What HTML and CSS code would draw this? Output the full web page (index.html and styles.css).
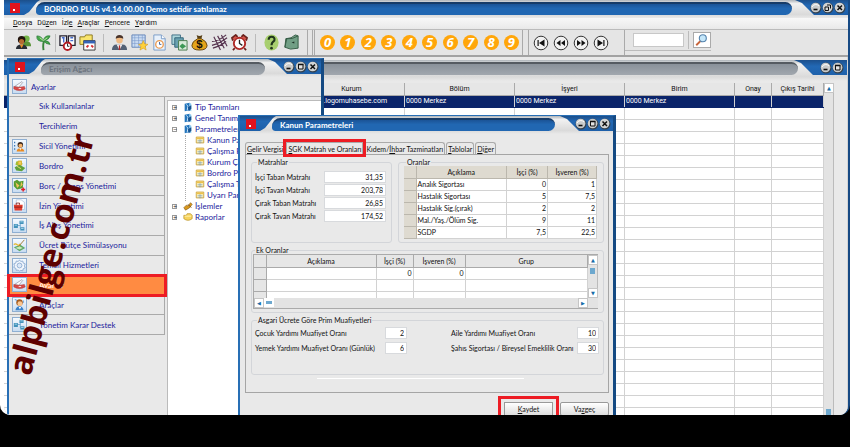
FILE: index.html
```html
<!DOCTYPE html>
<html lang="tr">
<head>
<meta charset="utf-8">
<title>BORDRO PLUS</title>
<link rel="stylesheet" href="styles.css">
</head>
<body>
<svg class="defs" aria-hidden="true">
  <symbol id="min" viewBox="0 0 12 12"><circle cx="6" cy="6" r="5.5" fill="#34404c"/><circle cx="5.6" cy="5.5" r="4.8" fill="#c9cbcb"/><path d="M2 5a4 3.6 0 0 1 7-1" stroke="#fff" fill="none"/><path d="M3.5 7.5h4" stroke="#111" stroke-width="1.6"/></symbol>
  <symbol id="max" viewBox="0 0 12 12"><circle cx="6" cy="6" r="5.5" fill="#34404c"/><circle cx="5.6" cy="5.5" r="4.8" fill="#c9cbcb"/><path d="M3.5 3.5h4.500v4.500h-4.500z" stroke="#111" fill="#e4e4e4"/><path d="M3 3.500h5.500" stroke="#111" stroke-width="1.500"/></symbol>
  <symbol id="res" viewBox="0 0 12 12"><circle cx="6" cy="6" r="5.5" fill="#34404c"/><circle cx="5.6" cy="5.5" r="4.8" fill="#d2d4d4"/><path d="M5 3h3.500v3.500M3 5h3.500v3.500h-3.500z" stroke="#111" fill="none"/></symbol>
  <symbol id="cls" viewBox="0 0 12 12"><circle cx="6" cy="6" r="5.5" fill="#34404c"/><circle cx="5.6" cy="5.5" r="4.8" fill="#d2d4d4"/><path d="M3.500 3.500l4.500 4.500M8 3.500l-4.500 4.500" stroke="#111" stroke-width="1.500"/></symbol>
  <symbol id="knife" viewBox="0 0 16 16"><path d="M2 8l9-6 1 1-5 6z" fill="#fff" stroke="#889" stroke-width=".8"/><path d="M1 8q6 2 13 0l1 3q-7 4-14 0z" fill="#d94a48" stroke="#a33" stroke-width=".6"/><path d="M7 10.500h3" stroke="#fff"/></symbol>
  <symbol id="user" viewBox="0 0 16 16"><path d="M2 2v12" stroke="#3a78b8" stroke-width="1.500" stroke-dasharray="2 2"/><circle cx="9" cy="6" r="3.400" fill="#3c2a20"/><circle cx="9.200" cy="7" r="2.500" fill="#f5b26b"/><path d="M4.500 14q.5-4 4.500-4t5 4z" fill="#eb8a20"/><path d="M8 10l1 3 1-3" fill="#fff"/></symbol>
  <symbol id="coins" viewBox="0 0 16 16"><path d="M4 3l5-1 3 4-4 3-5-2z" fill="#a2bd35"/><path d="M6 2h5v6H6z" fill="#d9b32f"/><path d="M2 10l6-3 7 4-4 4-7-1z" fill="#5fa03a"/><path d="M5 9l5 3M7 4h3M7 6h3" stroke="#ffe27b"/></symbol>
  <symbol id="debt" viewBox="0 0 16 16"><path d="M1 3l4-2 3 2 5-1-1 9-7 2-4-4z" fill="#579d30"/><path d="M3 4l5 4-3 3zM10 3l2 4-3 3z" fill="#f0c25c"/><path d="M10 13h5M12.500 10.500v5" stroke="#e21d25" stroke-width="1.800"/></symbol>
  <symbol id="case" viewBox="0 0 16 16"><path d="M4 1h6l4 3v9H4z" fill="#fff" stroke="#8ba7c8" stroke-width=".6"/><path d="M1 7h11l-1 7H2z" fill="#e23f2f"/><path d="M4 7V5h4v2M1.500 10h10" stroke="#7c1715" fill="none"/></symbol>
  <symbol id="flow" viewBox="0 0 16 16"><path d="M4 8h5M9 4v8" stroke="#67a3cc"/><path d="M1 6h5v5H1zM8 2h5v4H8zM9 10h5v4H9z" fill="#4292ba"/><path d="M2 7h3v1H2zM9 3h3v1H9zM10 11h3v1h-3z" fill="#bce3f4"/></symbol>
  <symbol id="budget" viewBox="0 0 16 16"><path d="M1 10l8-3 6 4-7 4z" fill="#5fa864"/><path d="M3 11l5-2 4 2-4 2z" fill="#c9e8bb"/><path d="M1 7q2-2 4 0t4-1" fill="none" stroke="#e8b523" stroke-width="1.500"/><path d="M7 9l7-8" stroke="#a37c39" stroke-width="1.200"/></symbol>
  <symbol id="gear" viewBox="0 0 16 16"><path d="M8 1l1.500 2 2.500-.5.500 2.500 2.500 1-1 2.500 1 2.500-2.500 1-.5 2.500-2.500-.5L8 15l-1.500-1.500-2.500.5-.5-2.500-2.500-1 1-2.500-1-2 2.500-1L4 2.500l2.500.5z" fill="#f2f7fd" stroke="#85a5cc"/><circle cx="8" cy="8" r="3" fill="#dbe8f7" stroke="#85a5cc"/></symbol>
  <symbol id="tools" viewBox="0 0 16 16"><circle cx="8" cy="5.500" r="4" fill="#a55d22"/><circle cx="8.500" cy="7" r="3" fill="#fac58e"/><path d="M3 15q1-5 5-5t5 5z" fill="#3a82ca"/><path d="M7 11l1.500 3 1.500-3z" fill="#fff"/><path d="M2 2h2v2M13 3v3" stroke="#5b9bdb" fill="none"/></symbol>
  <symbol id="book" viewBox="0 0 12 12"><path d="M2 2l6-1v9l-6 1z" fill="#2476bd"/><path d="M8 1l2 1v9l-3-1z" fill="#8bc8ef"/><path d="M4 3l2 2-1 5" stroke="#e8f6ff" fill="none"/><path d="M6 6l4-2v4l-3 3z" fill="#185390"/></symbol>
  <symbol id="form" viewBox="0 0 12 12"><path d="M1.500 2.500h9v7h-9z" fill="#fff6c4" stroke="#c79b2c"/><path d="M2 3h8v2H2z" fill="#ecc14c"/><path d="M3 6.500h6M3 8.500h6M6 5v5" stroke="#7897b6" stroke-width=".7"/></symbol>
  <symbol id="hand" viewBox="0 0 12 12"><path d="M1 8l3-3 2 1 3-4 2 2-3 4-5 3z" fill="#d9991f" stroke="#805510" stroke-width=".7"/><path d="M6 4l4 4" stroke="#76480d"/></symbol>
  <symbol id="folder" viewBox="0 0 12 12"><path d="M1 4h3l1-2h4l2 2v4q-5 4-10 0z" fill="#f7d35d" stroke="#b58c1c" stroke-width=".8"/><path d="M2 5h8" stroke="#fff5bb"/></symbol>
</svg>
<main class="app">
  <header class="titlebar active">
    <i class="logo"></i><h1 class="pill">BORDRO PLUS v4.14.00.00 Demo setidir satılamaz</h1>
    <span class="winbtns"><button aria-label="Küçült"><svg><use href="#min"/></svg></button><button aria-label="Önceki boyut"><svg><use href="#res"/></svg></button><button aria-label="Kapat"><svg><use href="#cls"/></svg></button></span>
  </header>
  <nav class="menubar"><a href="#d"><u>D</u>osya</a><a href="#u">Dü<u>z</u>en</a><a href="#i">İzl<u>e</u></a><a href="#a"><u>A</u>raçlar</a><a href="#p"><u>P</u>encere</a><a href="#y"><u>Y</u>ardım</a></nav>
  <div class="toolbar">
    <div class="group tools">
      <button aria-label="Personel"><svg viewBox="0 0 18 18"><circle cx="12" cy="5" r="3.500" fill="#75b548"/><path d="M8 13q0-5 5-5 4 0 4 5z" fill="#589235"/><circle cx="7" cy="6" r="4" fill="#21150e"/><circle cx="7" cy="8" r="2.700" fill="#b56b32"/><path d="M1 16q0-5 6-5t6 5z" fill="#282d35"/><path d="M5 11l2 4 2-4z" fill="#ed8d25"/></svg></button>
      <button aria-label="Palmiye"><svg viewBox="0 0 18 18"><path d="M9 17q-1-7 1-10" stroke="#38843a" stroke-width="2" fill="none"/><path d="M9 8Q1 8 2 2q5 0 7 5 1-6 7-5-1 4-6 5 5 0 6 4-5 0-7-4z" fill="#48a849" stroke="#267536" stroke-width=".7"/><path d="M5 4l4 3 4-3" stroke="#bfe9a2" fill="none"/></svg></button>
      <i class="sep"></i>
      <button aria-label="Takvim"><svg viewBox="0 0 18 18"><path d="M1 2h7v10H1zM10 2h7v10h-7z" fill="#fff" stroke="#24212e" stroke-width="1.400"/><path d="M3 4h3M12 4h3M5 4v5M12 7h3" stroke="#466dcc" stroke-width="1.500"/><circle cx="9" cy="13" r="4" fill="#fff" stroke="#b31b22" stroke-width="2"/><path d="M9 10v3h2" stroke="#222" fill="none"/></svg></button>
      <button aria-label="Dosyalar"><svg viewBox="0 0 18 18"><path d="M1 3h5l1-2h7v10H1z" fill="#f9e56d" stroke="#8b7821"/><path d="M5 7h12v10H5z" fill="#fff" stroke="#333"/><path d="M5 7h12v3H5z" fill="#3564b6"/><path d="M8 14l2-2M13 12l2 2" stroke="#d33234" stroke-width="2"/></svg></button>
      <i class="sep wide"></i>
      <button aria-label="Sicil kartı"><svg viewBox="0 0 18 18"><ellipse cx="9" cy="6" rx="3.500" ry="4" fill="#efb982"/><path d="M5 5q0-4 4-4t4 4q-4-2-8 0z" fill="#49332a"/><path d="M1 17q0-6 5-6h6q5 0 5 6z" fill="#536175"/><path d="M6 11h6l-3 6z" fill="#fff"/><path d="M9 12v5" stroke="#b12b2a" stroke-width="1.500"/></svg></button>
      <button aria-label="Puantaj"><svg viewBox="0 0 18 18"><path d="M1 1h14v13H1z" fill="#cbdcf2" stroke="#6485b8"/><path d="M1 4h14M1 7h14M1 10h14M4 1v13M8 1v13M12 1v13" stroke="#7999cb" stroke-width=".6"/><path d="M13 7l1.500 3.500 3.500.5-3 2 1 4-3-2-3.500 2 1-4-2.500-2 3.500-.5z" fill="#ffd13a" stroke="#d49a13" stroke-width=".6"/></svg></button>
      <button aria-label="Mesai"><svg viewBox="0 0 18 18"><path d="M3 1h8l4 4v12H3z" fill="#e8f1fb" stroke="#799bc7"/><path d="M11 1v4h4" fill="#fff" stroke="#799bc7"/><circle cx="9" cy="11" r="4" fill="#fff" stroke="#eb9a50" stroke-width="1.400"/><path d="M9 8.500V11h2" stroke="#3b639f" fill="none"/></svg></button>
      <button aria-label="Kopyala"><svg viewBox="0 0 18 18"><path d="M1 1h9v10H1z" fill="#acd5da" stroke="#427087"/><path d="M4 4h9v10H4z" fill="#69a1b0" stroke="#32657a"/><path d="M8 7h9v10H8z" fill="#d7ead9" stroke="#487b4c"/><path d="M9 13l3-3 4 3-4 3z" fill="#3d9856"/></svg></button>
      <button aria-label="Ücret"><svg viewBox="0 0 18 18"><path d="M6 1q3 2 6 0l-1 4H7z" fill="#574019"/><path d="M7 5Q1 8 1 12q0 5 8 5t8-5q0-4-6-7z" fill="#e5a51c" stroke="#63430d"/><text x="9" y="15" class="money">$</text></svg></button>
      <button aria-label="Tarama"><svg viewBox="0 0 18 18"><path d="M1 8Q8 8 16 1M1 12Q9 10 17 4M2 15q8-2 14-7M3 3l7 14M7 2l7 13M11 1l6 12" stroke="#55324e" stroke-width="1.200" fill="none"/></svg></button>
      <button aria-label="Alarm"><svg viewBox="0 0 18 18"><path d="M2 7L1 4l4-3 2 2M16 7l1-3-4-3-2 2M4 15l-2 2M14 15l2 2" stroke="#68221d" stroke-width="1.800" fill="#db5447"/><circle cx="9" cy="10" r="6" fill="#fff" stroke="#af2a27" stroke-width="2"/><path d="M9 6v4l3 2" stroke="#222" stroke-width="1.400" fill="none"/></svg></button>
      <i class="sep wide"></i>
      <button aria-label="Yardım"><svg viewBox="0 0 18 18"><ellipse cx="9" cy="9" rx="7.500" ry="8.500" fill="#a8cf6f"/><path d="M6 6q0-3 3-3 4 0 3 4-3 2-3 5" stroke="#20351d" stroke-width="2.200" fill="none"/><circle cx="9" cy="15" r="1.400" fill="#20351d"/></svg></button>
      <button aria-label="Çıkış"><svg viewBox="0 0 18 18"><path d="M3 5q6 0 10-4l3 1v13l-8 1-6-2z" fill="#719f85" stroke="#355c45"/><path d="M3 5q7 1 13-3M4 5l-2 9" stroke="#355c45" fill="none"/><path d="M9 9l3-1v2z" fill="#1d3226"/></svg></button>
    </div>
    <div class="group digits"><button>0</button><button>1</button><button>2</button><button>3</button><button>4</button><button>5</button><button>6</button><button>7</button><button>8</button><button>9</button></div>
    <div class="group travel">
      <button aria-label="İlk"><svg viewBox="0 0 16 16"><circle cx="8" cy="8" r="6.800"/><path d="M4.500 5v6h1.200V5zM11.500 4.500v7L6 8z"/></svg></button>
      <button aria-label="Önceki"><svg viewBox="0 0 16 16"><circle cx="8" cy="8" r="6.800"/><path d="M7.500 5v6l-4-3zM12 5v6L8 8z"/></svg></button>
      <button aria-label="Sonraki"><svg viewBox="0 0 16 16"><circle cx="8" cy="8" r="6.800"/><path d="M4 5v6l4-3zM8.500 5v6l4-3z"/></svg></button>
      <button aria-label="Son"><svg viewBox="0 0 16 16"><circle cx="8" cy="8" r="6.800"/><path d="M10.300 5v6h1.200V5zM4.500 4.500v7L10 8z"/></svg></button>
    </div>
    <div class="search"><input type="text" aria-label="Ara"><i class="sep"></i><button aria-label="Bul"><svg viewBox="0 0 16 16"><path d="M2 14l5-5" stroke="#c8653c" stroke-width="2.200"/><circle cx="9.500" cy="6" r="4" fill="#c5e7fa" stroke="#5684ad" stroke-width="1.300"/></svg></button></div>
  </div>
  <div class="desktop">
    <section class="records">
      <header class="titlebar"><i class="logo"></i><span class="pill"></span><span class="winbtns"><button aria-label="Küçült"><svg><use href="#min"/></svg></button><button aria-label="Büyüt"><svg><use href="#max"/></svg></button></span></header>
      <div class="recordgrid">
        <table class="grid" id="records">
          <colgroup><col class="c-rest"><col class="c-110"><col class="c-110"><col class="c-110"><col class="c-37"><col class="c-52"></colgroup>
          <thead><tr><th class="kurum">Kurum</th><th>Bölüm</th><th>İşyeri</th><th>Birim</th><th>Onay</th><th>Çıkış Tarihi</th></tr></thead>
          <tbody><tr class="sel"><td class="kurum">www.logomuhasebe.com</td><td>0000 Merkez</td><td>0000 Merkez</td><td>0000 Merkez</td><td></td><td></td></tr></tbody>
        </table>
        <div class="vscroll"><button aria-label="Yukarı">▲</button><i></i></div>
      </div>
    </section>

    <section class="window treewin">
      <header class="titlebar"><i class="logo"></i><h2 class="pill">Erişim Ağacı</h2><span class="winbtns"><button aria-label="Küçült"><svg><use href="#min"/></svg></button><button aria-label="Büyüt"><svg><use href="#max"/></svg></button><button aria-label="Kapat"><svg><use href="#cls"/></svg></button></span></header>
      <div class="crumb"><svg class="tile"><use href="#knife"/></svg><span>Ayarlar</span></div>
      <div class="split">
        <nav class="side">
          <a href="#1"><i></i>Sık Kullanılanlar</a><a href="#2"><i></i>Tercihlerim</a>
          <a href="#3"><svg class="tile"><use href="#user"/></svg>Sicil Yönetimi</a>
          <a href="#4"><svg class="tile"><use href="#coins"/></svg>Bordro</a>
          <a href="#5"><svg class="tile"><use href="#debt"/></svg>Borç / Avans Yönetimi</a>
          <a href="#6"><svg class="tile"><use href="#case"/></svg>İzin Yönetimi</a>
          <a href="#7"><svg class="tile"><use href="#flow"/></svg>İş Akış Yönetimi</a>
          <a href="#8"><svg class="tile"><use href="#budget"/></svg>Ücret Bütçe Simülasyonu</a>
          <a href="#9"><svg class="tile"><use href="#gear"/></svg>Temsil Hizmetleri</a>
          <a href="#10" class="current"><svg class="tile"><use href="#knife"/></svg>Ayarlar</a>
          <a href="#11"><svg class="tile"><use href="#tools"/></svg>Araçlar</a>
          <a href="#12"><svg class="tile"><use href="#flow"/></svg>Yönetim Karar Destek</a>
        </nav>
        <ul class="tree">
          <li><b>+</b><svg><use href="#book"/></svg>Tip Tanımları</li>
          <li><b>+</b><svg><use href="#book"/></svg>Genel Tanımlar</li>
          <li><b>−</b><svg><use href="#book"/></svg>Parametreler
            <ul><li><svg><use href="#form"/></svg>Kanun Parametreleri</li><li><svg><use href="#form"/></svg>Çalışma Parametreleri</li><li><svg><use href="#form"/></svg>Kurum Çalışma</li><li><svg><use href="#form"/></svg>Bordro Parametreleri</li><li><svg><use href="#form"/></svg>Çalışma Takvimi</li><li><svg><use href="#form"/></svg>Uyarı Parametreleri</li></ul></li>
          <li><b>+</b><svg><use href="#hand"/></svg>İşlemler</li>
          <li><b>+</b><svg><use href="#folder"/></svg>Raporlar</li>
        </ul>
      </div>
    </section>

    <section class="window dialog">
      <header class="titlebar active"><i class="logo"></i><h2 class="pill">Kanun Parametreleri</h2><span class="winbtns"><button aria-label="Küçült"><svg><use href="#min"/></svg></button><button aria-label="Büyüt"><svg><use href="#max"/></svg></button><button aria-label="Kapat"><svg><use href="#cls"/></svg></button></span></header>
      <div class="tabs"><button><u>G</u>elir Vergisi</button><button class="on"><u>S</u>GK Matrah ve Oranları</button><button>Kıdem/<u>İh</u>bar Tazminatları</button><button><u>T</u>ablolar</button><button><u>D</u>iğer</button></div>
      <form class="page">
        <div class="top">
          <fieldset class="matrah"><legend>Matrahlar</legend>
            <label for="m1">İşçi Taban Matrahı</label><input id="m1" value="31,35">
            <label for="m2">İşçi Tavan Matrahı</label><input id="m2" value="203,78">
            <label for="m3">Çırak Taban Matrahı</label><input id="m3" value="26,85">
            <label for="m4">Çırak Tavan Matrahı</label><input id="m4" value="174,52">
          </fieldset>
          <fieldset class="oran"><legend>Oranlar</legend>
            <table class="grid beige"><colgroup><col class="c-12"><col class="c-rest"><col class="c-41"><col class="c-49"></colgroup>
              <thead><tr><th></th><th>Açıklama</th><th>İşçi (%)</th><th>İşveren (%)</th></tr></thead>
              <tbody><tr><th></th><td>Analık Sigortası</td><td class="n">0</td><td class="n">1</td></tr><tr><th></th><td>Hastalık Sigortası</td><td class="n">5</td><td class="n">7,5</td></tr><tr><th></th><td>Hastalık Sig.(çırak)</td><td class="n">2</td><td class="n">2</td></tr><tr><th></th><td>Mal./Yaş./Ölüm Sig.</td><td class="n">9</td><td class="n">11</td></tr><tr><th></th><td>SGDP</td><td class="n">7,5</td><td class="n">22,5</td></tr></tbody></table>
          </fieldset>
        </div>
        <fieldset class="ek"><legend>Ek Oranlar</legend>
          <div class="ekgrid">
            <div class="clip"><table class="grid"><colgroup><col class="c-12"><col class="c-110"><col class="c-37"><col class="c-52"><col class="c-rest"></colgroup>
              <thead><tr><th></th><th>Açıklama</th><th>İşçi (%)</th><th>İşveren (%)</th><th>Grup</th></tr></thead>
              <tbody><tr><th></th><td></td><td class="n">0</td><td class="n">0</td><td></td></tr><tr><th></th><td></td><td></td><td></td><td></td></tr><tr><th></th><td></td><td></td><td></td><td></td></tr></tbody></table></div>
            <div class="vscroll"><button type="button" aria-label="Yukarı">▲</button><i></i><button type="button" class="end" aria-label="Aşağı">▼</button></div>
            <div class="hscroll"><button type="button" aria-label="Sol">◀</button><i></i><button type="button" class="end" aria-label="Sağ">▶</button></div>
          </div>
        </fieldset>
        <fieldset class="muaf"><legend>Asgari Ücrete Göre Prim Muafiyetleri</legend>
          <label for="a1">Çocuk Yardımı Muafiyet Oranı</label><input id="a1" value="2"><label class="r" for="a2">Aile Yardımı Muafiyet Oranı</label><input id="a2" value="10">
          <label for="a3">Yemek Yardımı Muafiyet Oranı (Günlük)</label><input id="a3" value="6"><label class="r" for="a4">Şahıs Sigortası / Bireysel Emeklilik Oranı</label><input id="a4" value="30">
        </fieldset>
        <hr>
      </form>
      <footer class="actions"><button class="marked"><u>K</u>aydet</button><button>Va<u>z</u>geç</button></footer>
    </section>
  </div>
</main>
<div class="base"></div>
<div class="watermark">alpbilge.com.tr</div>
<script src="script.js"></script>
</body>
</html>
```
FILE: styles.css
```css
* { box-sizing: border-box; }
body { margin: 0; height: 100vh; display: flex; flex-direction: column; overflow: hidden; background: #000; position: relative; font: 7px/10px Roboto, "Liberation Sans", sans-serif; color: #111; }
button, input { font: inherit; color: inherit; padding: 0; margin: 0; border: 0; background: none; min-width: 0; }
h1, h2, ul, fieldset, hr { margin: 0; padding: 0; border: 0; list-style: none; }
a { color: inherit; text-decoration: none; }
svg { display: block; }
.defs { position: absolute; width: 0; height: 0; }
.app { flex: 1; min-height: 0; display: flex; flex-direction: column; background: #e6e6e6; border-left: 4px solid #fff; border-right: 2px solid #174a84; border-radius: 0 0 10px 10px; overflow: hidden; }
.base { height: 32px; background: #000; flex: none; }

.titlebar { position: relative; flex: none; height: 18px; display: flex; align-items: flex-start; background: linear-gradient(#1c4f8b, #2268b4 30%, #1b5ca5); }
.titlebar::before { content: ""; position: absolute; inset: 0; background: linear-gradient(#aeb4ba, #f1f1f1 20%, #dadada 80%, #e9e9e9); clip-path: polygon(36px 0, calc(100% - 53px) 0, calc(100% - 46px) 3px, calc(100% - 34px) 15px, 100% 15px, 100% 100%, 0 100%, 0 15px, 20px 15px, 25px 12px, 33px 2px); }
.titlebar > * { position: relative; }
.logo { width: 10px; height: 10px; margin: 3px 16px 0 6px; background: radial-gradient(circle at 4px 7px, #fff 1px, transparent 1px), #e0131d; }
.pill { flex: 1; height: 13px; margin: 2px 0 0; padding-left: 8px; border-radius: 9px 7px 7px 4px; font: bold 8px/10px Lato, "Liberation Sans", sans-serif; white-space: nowrap; border-top: 2px solid #555b62; background: linear-gradient(#89919a, #a1a7ae); color: #6c737d; }
.active .pill { background: linear-gradient(#1b5396, #2167b2 40%); border-top-color: #173c68; color: #fff; }
.winbtns { display: flex; margin: 2px 2px 0 18px; }
.winbtns button, .winbtns svg { width: 12px; height: 12px; display: block; }

.menubar { height: 11px; display: flex; gap: 5px; padding-left: 9px; background: linear-gradient(#f8f8f8, #e9e9e9); line-height: 11px; flex: none; }
.toolbar { height: 28px; flex: none; display: flex; border-bottom: 2px solid #a2a2a2; border-top: 1px solid #bbb; background: #e5e5e5; }
.group { display: flex; align-items: center; border-right: 1px solid #aaa; flex: none; }
.group button { flex: none; }
.tools { width: 304px; padding-left: 11px; gap: 3px; }
.tools svg { width: 17px; height: 17px; }
.sep { width: 1px; height: 18px; background: #bbb; }
.sep.wide { margin: 0 4px; }
.money { font: bold 12px "Liberation Sans", sans-serif; text-anchor: middle; fill: #18120a; }
.digits { width: 211px; padding: 0 3px 0 5px; justify-content: space-between; margin: 0 5px 0 4px; border-left: 3px double #aaa; }
.digits button { width: 15px; height: 15px; border-radius: 50%; background: #ffa60a; color: #fff; font: italic bold 13px/15px "Open Sans", sans-serif; text-align: center; }
.travel { width: 97px; padding-left: 4px; gap: 4px; border-left: 1px solid #aaa; }
.travel svg { width: 16px; height: 16px; }
.travel circle { fill: #f2f2f2; stroke: #333; }
.travel path { fill: #111; }
.search { display: flex; gap: 4px; align-items: center; align-self: flex-start; padding: 1px 0 1px 8px; border-bottom: 1px solid #bbb; }
.search input { width: 51px; height: 14px; background: #fff; border: 1px solid #c8c8c8; }
.search button { width: 18px; height: 16px; background: #fff; border: 1px solid #aaa; }
.search svg { width: 15px; height: 14px; }

.desktop { flex: 1; min-height: 0; position: relative; overflow: hidden; background: #d4d4d4; }
.records { height: 100%; padding-top: 3px; display: flex; flex-direction: column; background: #e9e9e9; margin-right: 1px; }
.records .titlebar { height: 21px; }
.records .winbtns { margin: 2px 3px 0 22px; }
.recordgrid { display: flex; flex: 1; min-height: 0; margin-top: 2px; padding-right: 13px; overflow: hidden; }
.recordgrid .grid { flex: 1; align-self: flex-start; }
.grid { border-collapse: collapse; table-layout: fixed; width: 100%; background: #fff; line-height: 10px; }
.grid tr { height: 12px; }
.grid th, .grid td { padding: 0 1px; border: 1px solid #d2d2d2; border-width: 0 1px 1px 0; height: 12px; line-height: 10px; white-space: nowrap; overflow: hidden; font-weight: normal; text-align: left; }
.grid th { background: #e6e6e6; border-color: #aaa; text-align: center; }
.beige th { background: #dedad0; border-color: #bbb7ad; }
.grid td.n { text-align: right; }
.grid .sel td { background: #0a246a; color: #fff; border-bottom-color: #0a246a; }
.grid .kurum { padding-left: 296px; }
.grid td.kurum { padding-left: 304px; }
.c-12 { width: 12px; } .c-37 { width: 37px; } .c-41 { width: 41px; } .c-49 { width: 49px; } .c-52 { width: 52px; } .c-110 { width: 110px; }
.vscroll, .hscroll { display: flex; background: #e3e3e3; }
.vscroll { width: 10px; flex-direction: column; border-right: 1px solid #bbb; }
.vscroll button, .hscroll button { width: 10px; height: 10px; flex: none; background: #fff; border: 1px solid #c5c5c5; color: #176ca8; font: 5px/8px "DejaVu Sans", sans-serif; text-align: center; }
.vscroll i { width: 5px; height: 6px; margin: 3px 2px; background: #6da8ce; }
.recordgrid .vscroll i { margin-top: auto; margin-bottom: 0; }
.hscroll i { width: 10px; height: 9px; border: 3px solid #fff; border-width: 3px 2px; background: #6da8ce; }
.vscroll .end { margin-top: auto; }
.hscroll .end { margin: 0 10px 0 auto; }

.window { position: absolute; display: flex; flex-direction: column; background: #e9e9e9; border: 2px solid #286fb5; border-width: 1px 3px 0 2px; border-right-color: #154a83; font-family: Lato, "Liberation Sans", sans-serif; }
.treewin { left: 3px; top: 1px; width: 317px; height: 100%; }
.treewin .pill { margin-top: 3px; }
.crumb { height: 20px; flex: none; display: flex; align-items: center; gap: 4px; padding-left: 3px; color: #1b1b9c; border-bottom: 1px solid #aaa; font-size: 8px; }
.tile { width: 15px; height: 15px; flex: none; background: linear-gradient(#f5faff, #c8dcf1); border: 1px solid #8fafd2; }
.split { display: flex; flex: 1; min-height: 0; }
.side { width: 156px; height: 238px; display: grid; grid-auto-rows: 1fr; color: #1b1b9c; font-size: 8px; }
.side a { display: flex; align-items: center; gap: 12px; padding-left: 3px; border: 1px solid #aaa; border-width: 0 1px 1px 0; min-height: 0; white-space: nowrap; }
.side i { width: 15px; }
.side .current { background: #ff8b42; color: #fff; outline: 3px solid #ed1c24; outline-offset: -1px; position: relative; }
.tree { flex: 1; min-width: 0; margin: 3px 0 0 2px; padding: 1px 0 0 4px; background: #fff; color: #1b1b9c; border: 1px solid #bbb; border-width: 1px 0 0 1px; font-size: 8px; line-height: 11px; white-space: nowrap; overflow: hidden; }
.tree b { float: left; width: 5px; height: 5px; margin: 3px 6px 0 0; border: 1px solid #999; font: 5px/3px "DejaVu Sans", sans-serif; color: #222; text-align: center; }
.tree svg { float: left; width: 10px; height: 10px; margin-right: 2px; }
.tree ul { clear: both; margin-left: 13px; border-left: 1px dotted #aaa; padding-left: 9px; }

.dialog { left: 234px; top: 58px; width: 378px; height: 100%; }
.dialog .winbtns { margin-left: 20px; }
.tabs { display: flex; gap: 1px; align-items: flex-end; height: 20px; padding-left: 5px; flex: none; }
.tabs button { flex: none; height: 12px; padding: 0 1px; border: 1px solid #aaa; border-bottom: 0; border-radius: 3px 3px 0 0; }
.tabs .on { position: relative; outline: 3px solid #ed1c24; outline-offset: 0; border-radius: 0; }
.page { margin: 0 4px 0 5px; border: 1px solid #a5a5a5; padding: 3px 4px 0 5px; height: 239px; flex: none; display: flex; flex-direction: column; gap: 3px; }
fieldset { border: 1px solid #d3d5d9; border-radius: 3px; min-width: 0; }
legend { margin-left: 2px; padding: 0 1px; height: 8px; line-height: 8px; }
.top { display: flex; gap: 6px; }
.matrah { width: 141px; height: 85px; display: grid; grid-template-columns: 1fr 62px; grid-auto-rows: 13px; padding: 4px 5px 0 3px; }
.oran { flex: 1; padding: 0 6px 0 5px; }
.matrah label, .muaf label { align-self: center; white-space: nowrap; }
fieldset input { width: 100%; height: 12px; background: #fff; border: 1px solid #d8dadd; text-align: right; padding-right: 2px; align-self: center; }
.ek { height: 67px; padding: 0 5px 0 1px; }
.ekgrid { display: grid; grid-template-columns: 1fr 10px; grid-template-rows: 43px 10px; border: 1px solid #aaa; border-right: 0; }
.clip { overflow: hidden; }
.hscroll { grid-column: 1 / 3; }
.muaf { height: 59px; display: grid; grid-template-columns: 130px 22px minmax(0, 1fr) 22px; grid-auto-rows: 15px; padding: 1px 4px 0 3px; }
.muaf .r { padding-left: 44px; }
hr { width: 207px; height: 1px; margin-left: 66px; background: #fff; }
.actions { display: flex; justify-content: flex-end; gap: 7px; padding: 9px 4px 0 0; }
.actions button { width: 49px; height: 14px; border: 1px solid #999; border-radius: 2px; background: linear-gradient(#fff, #ddd); }
.actions .marked { outline: 3px solid #ed1c24; outline-offset: 3px; border-radius: 0; }

.watermark { position: absolute; left: 51px; top: 254px; transform: translate(-50%, -50%) rotate(-75deg); font: bold 33px/40px "Open Sans", sans-serif; color: #5e0000; white-space: nowrap; pointer-events: none; }
```
FILE: script.js
```js
// Fill the record grid with empty rows down to the bottom of its window.
const body = document.querySelector("#records tbody");
for (let r = 0; r < 40; r++) {
  const row = body.insertRow();
  for (let c = 0; c < 6; c++) row.insertCell();
}
```
